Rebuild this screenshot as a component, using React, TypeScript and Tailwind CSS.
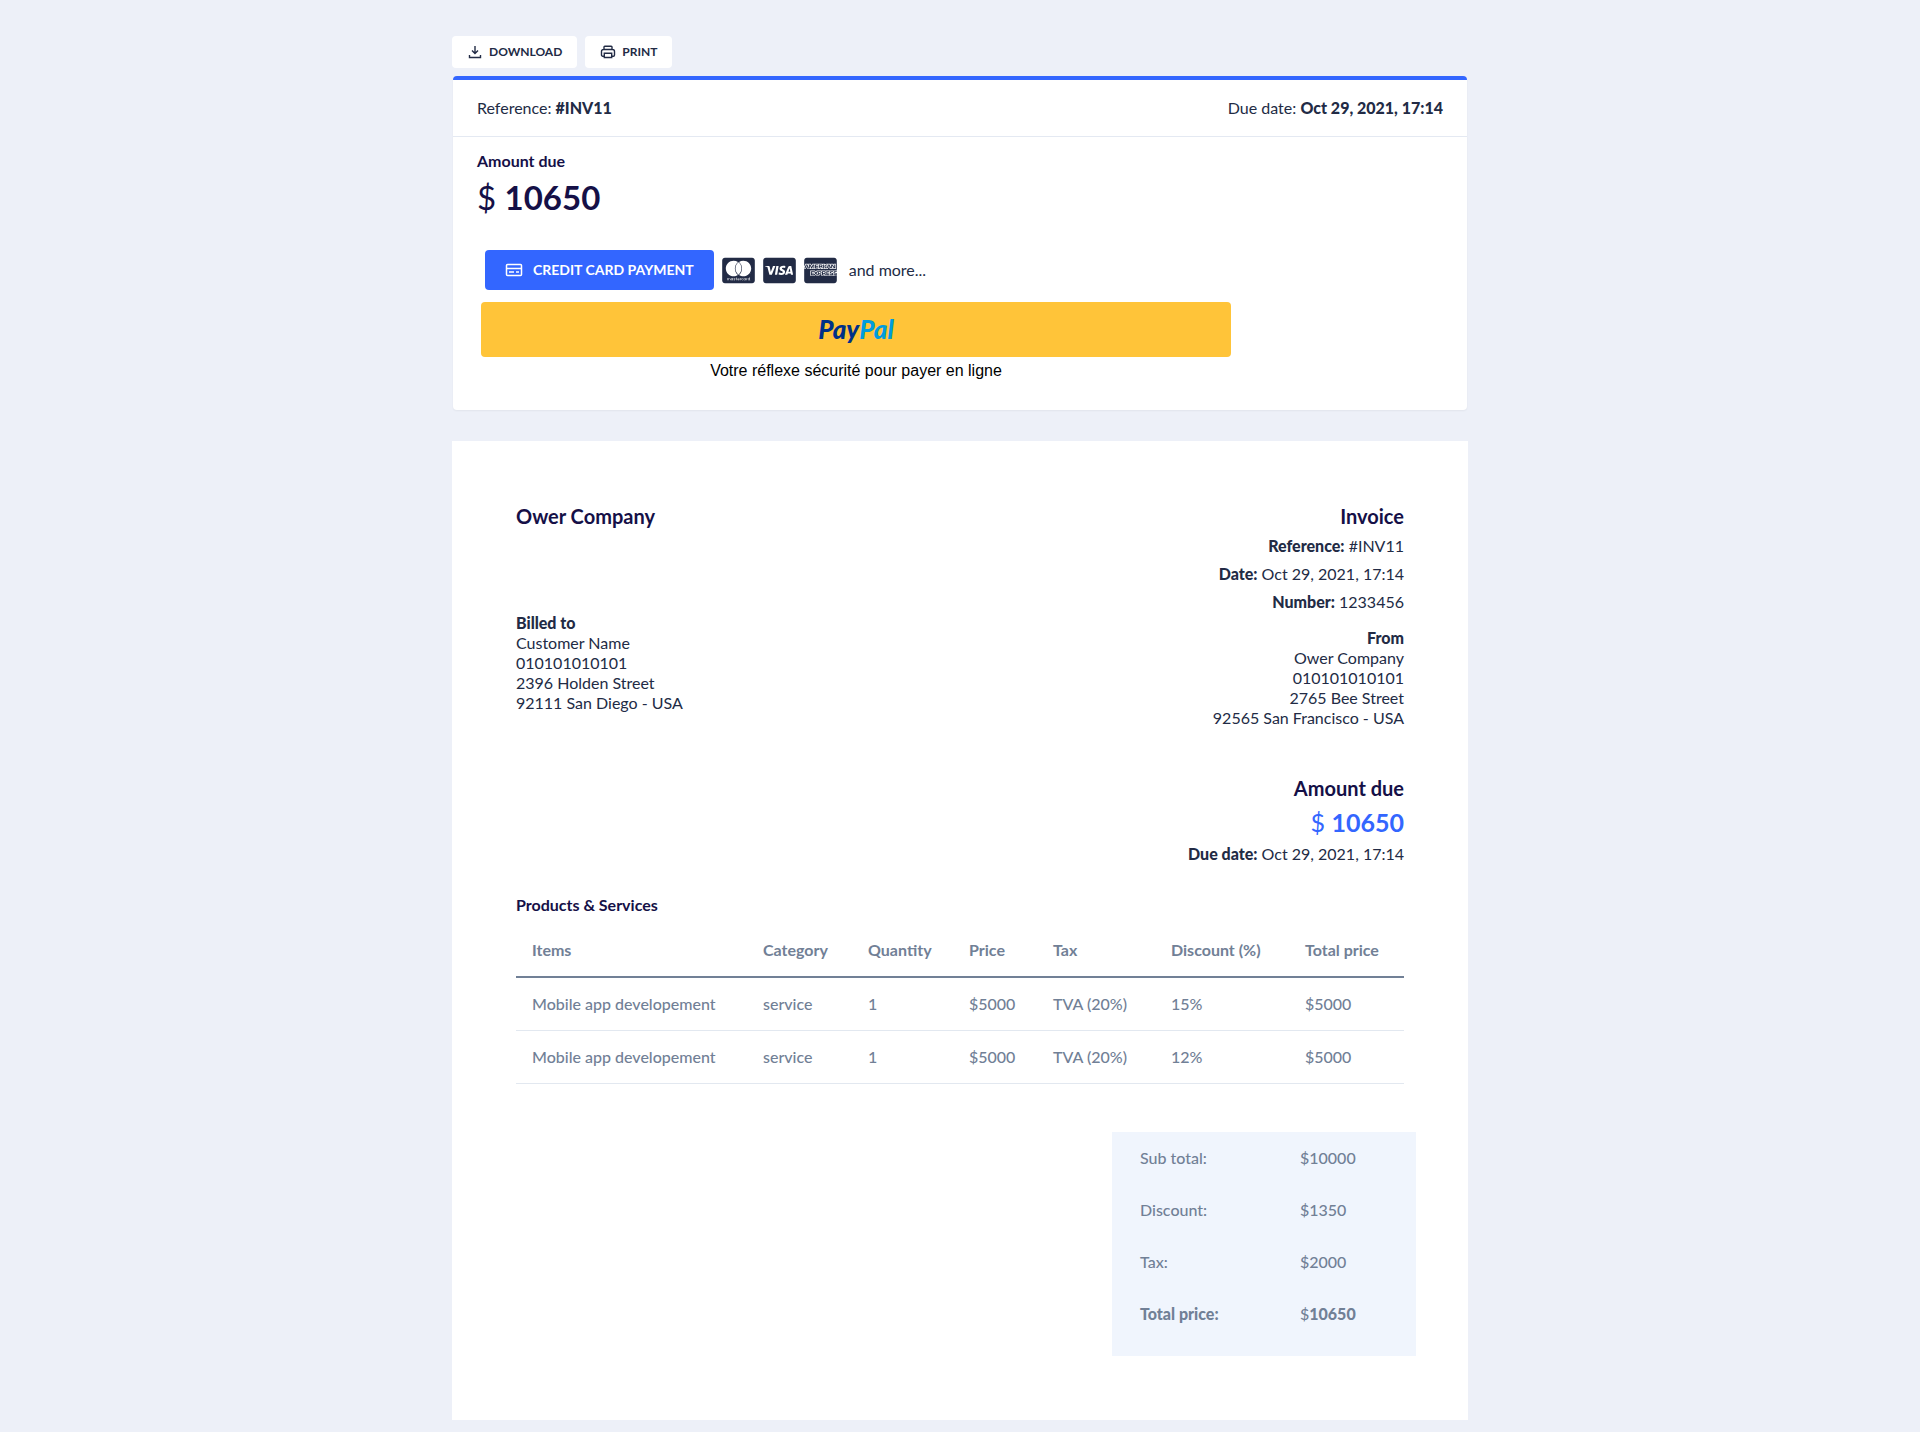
import type { ReactNode } from 'react';
import { FaCcAmex, FaCcMastercard, FaCcVisa } from 'react-icons/fa';

const items = [
  { name: 'Mobile app developement', category: 'service', quantity: 1, price: '$5000', tax: 'TVA (20%)', discount: '15%', total: '$5000' },
  { name: 'Mobile app developement', category: 'service', quantity: 1, price: '$5000', tax: 'TVA (20%)', discount: '12%', total: '$5000' },
];

function DownloadIcon() {
  return (
    <svg width="16" height="16" viewBox="0 0 16 16" fill="none" stroke="currentColor" strokeWidth="1.4" aria-hidden="true">
      <path d="M8 2v7.5M5 6.500 8 9.500l3-3M2.500 11v2.500h11V11" />
    </svg>
  );
}

function PrintIcon() {
  return (
    <svg width="16" height="16" viewBox="0 0 16 16" fill="none" stroke="currentColor" strokeWidth="1.4" aria-hidden="true">
      <path d="M4 5.500V3a.800.800 0 0 1 .800-.800h6.400a.800.800 0 0 1 .800.800v2.500M4 12.200H2.700a1.200 1.200 0 0 1-1.200-1.200V7.500a2 2 0 0 1 2-2h9a2 2 0 0 1 2 2V11a1.200 1.200 0 0 1-1.200 1.200H12" />
      <path d="M4.300 9.200h7.400v4.300H4.300z" />
    </svg>
  );
}

function CardIcon() {
  return (
    <svg width="18" height="18" viewBox="0 0 18 18" fill="none" stroke="currentColor" strokeWidth="1.5" aria-hidden="true">
      <rect x="1.5" y="3.5" width="15" height="11" rx="1" />
      <path d="M1.500 7.500h15M4 11h5M11 11h3" />
    </svg>
  );
}

function ToolbarButton({ icon, children }: { icon: ReactNode; children: ReactNode }) {
  return (
    <button type="button" className="flex h-8 items-center gap-1.5 rounded bg-white px-[15px] text-xs font-bold text-[#222b45]">
      {icon}
      {children}
    </button>
  );
}

function PaymentCard() {
  return (
    <section className="mx-px mt-2 rounded border-t-4 border-[#3366ff] bg-white shadow-xs">
      <div className="flex h-[57px] items-center justify-between border-b border-[#e4e9f2] px-6 text-base">
        <p>
          Reference: <strong className="font-black">#INV11</strong>
        </p>
        <p>
          Due date: <strong className="font-black">Oct 29, 2021, 17:14</strong>
        </p>
      </div>
      <div className="px-6 pt-3 pb-[25px]">
        <h2 className="text-base leading-6 font-bold text-[#151047]">Amount due</h2>
        <p className="text-[33px] leading-12 text-[#151047]">
          $ <span className="font-bold">10650</span>
        </p>
        <div className="mt-[29px] flex items-center pl-2">
          <button type="button" className="flex h-10 items-center gap-2.5 rounded bg-[#3366ff] px-5 text-sm font-bold text-white">
            <CardIcon />
            CREDIT CARD PAYMENT
          </button>
          <div className="ml-2 flex gap-2 text-[#222b45]">
            <FaCcMastercard className="h-[29px] w-[33px]" />
            <FaCcVisa className="h-[29px] w-[33px]" />
            <FaCcAmex className="h-[29px] w-[33px]" />
          </div>
          <span className="ml-3 text-base">and more...</span>
        </div>
        <div className="mt-3 ml-1 max-w-[750px]">
          <button
            type="button"
            className="flex h-[55px] w-full items-center justify-center rounded bg-[#ffc439] text-[26px] font-black text-[#003087] italic"
          >
            Pay<span className="text-[#009cde]">Pal</span>
          </button>
          <p className="text-center font-['Liberation_Sans',sans-serif] text-base leading-7 text-black">
            Votre réflexe sécurité pour payer en ligne
          </p>
        </div>
      </div>
    </section>
  );
}

function ItemsTable() {
  return (
    <table className="mt-1.5 w-full table-fixed text-left text-base text-[#718096]">
      <colgroup>
        <col className="w-[231px]" />
        <col className="w-[105px]" />
        <col className="w-[101px]" />
        <col className="w-[84px]" />
        <col className="w-[118px]" />
        <col className="w-[134px]" />
        <col className="w-[115px]" />
      </colgroup>
      <thead>
        <tr className="h-[54px] border-b-2 border-[#718096]">
          <th className="px-4">Items</th>
          <th className="px-4">Category</th>
          <th className="px-4">Quantity</th>
          <th className="px-4">Price</th>
          <th className="px-4">Tax</th>
          <th className="px-4">Discount (%)</th>
          <th className="px-4 whitespace-nowrap">Total price</th>
        </tr>
      </thead>
      <tbody>
        {items.map((item) => (
          <tr key={item.discount} className="h-[53px] border-b border-[#e2e8f0] font-medium">
            <td className="pl-4 whitespace-nowrap">{item.name}</td>
            <td className="pl-4">{item.category}</td>
            <td className="pl-4">{item.quantity}</td>
            <td className="pl-4">{item.price}</td>
            <td className="pl-4">{item.tax}</td>
            <td className="pl-4">{item.discount}</td>
            <td className="pl-4">{item.total}</td>
          </tr>
        ))}
      </tbody>
    </table>
  );
}

function Totals() {
  return (
    <dl className="mt-12 -mr-3 ml-auto grid w-[304px] grid-cols-[160px_1fr] gap-y-7 bg-[#f0f5fd] px-7 pt-[14px] pb-[30px] text-base leading-6 font-medium text-[#718096]">
      <dt>Sub total:</dt>
      <dd>$10000</dd>
      <dt>Discount:</dt>
      <dd>$1350</dd>
      <dt>Tax:</dt>
      <dd>$2000</dd>
      <dt className="font-black">Total price:</dt>
      <dd>
        $<span className="font-black">10650</span>
      </dd>
    </dl>
  );
}

function Invoice() {
  return (
    <section className="mt-[31px] bg-white px-16 pt-[63px] pb-16">
      <div className="flex justify-between text-base leading-5">
        <div>
          <h2 className="text-xl leading-6 font-bold text-[#151047]">Ower Company</h2>
          <address className="mt-[85px] not-italic">
            <strong className="font-black">Billed to</strong>
            <br />
            Customer Name
            <br />
            010101010101
            <br />
            2396 Holden Street
            <br />
            92111 San Diego - USA
          </address>
        </div>
        <div className="text-right">
          <h2 className="text-xl leading-6 font-bold text-[#151047]">Invoice</h2>
          <div className="mt-2 space-y-2">
            <p>
              <strong className="font-black">Reference:</strong> #INV11
            </p>
            <p>
              <strong className="font-black">Date:</strong> Oct 29, 2021, 17:14
            </p>
            <p>
              <strong className="font-black">Number:</strong> 1233456
            </p>
          </div>
          <address className="mt-4 not-italic">
            <strong className="font-black">From</strong>
            <br />
            Ower Company
            <br />
            010101010101
            <br />
            2765 Bee Street
            <br />
            92565 San Francisco - USA
          </address>
          <h2 className="mt-12 text-xl leading-6 font-bold text-[#151047]">Amount due</h2>
          <p className="mt-1.5 text-[25px] leading-8 text-[#3366ff]">
            $ <span className="font-bold">10650</span>
          </p>
          <p className="mt-1.5">
            <strong className="font-black">Due date:</strong> Oct 29, 2021, 17:14
          </p>
        </div>
      </div>
      <h3 className="mt-[29px] text-base leading-6 font-bold text-[#151047]">Products &amp; Services</h3>
      <ItemsTable />
      <Totals />
    </section>
  );
}

export default function App() {
  return (
    <main className="min-h-screen bg-[#edf0f8] px-4 pt-9 pb-3 font-['Lato','Noto_Sans',sans-serif] text-[#222b45]">
      <div className="mx-auto max-w-[1016px]">
        <div className="flex gap-2">
          <ToolbarButton icon={<DownloadIcon />}>DOWNLOAD</ToolbarButton>
          <ToolbarButton icon={<PrintIcon />}>PRINT</ToolbarButton>
        </div>
        <PaymentCard />
        <Invoice />
      </div>
    </main>
  );
}
